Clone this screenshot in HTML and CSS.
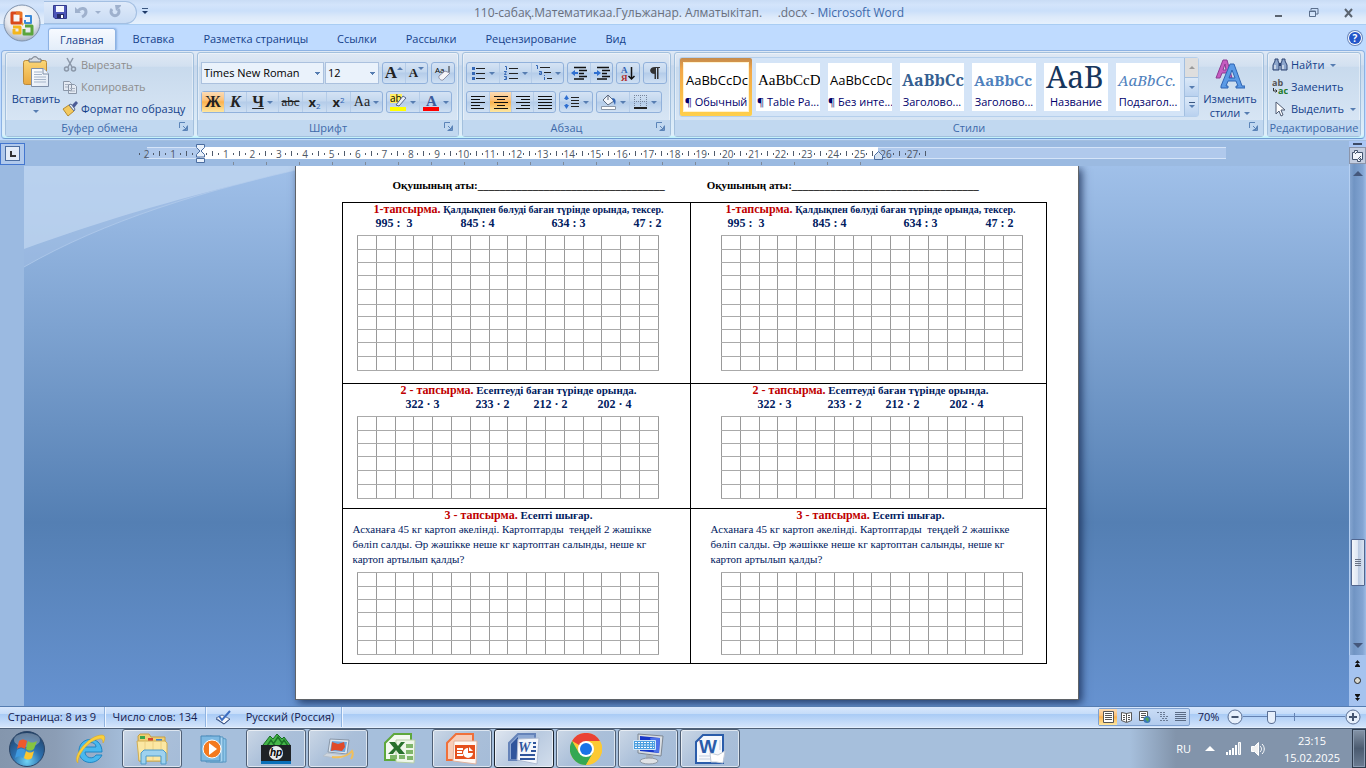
FILE: index.html
```
<!DOCTYPE html>
<html lang="ru">
<head>
  <meta charset="UTF-8">
  <title>110-сабақ.Математикаа.Гульжанар. Алматыкітап. .docx - Microsoft Word</title>
  <meta name="viewport" content="width=device-width, initial-scale=1.0">
  <link rel="stylesheet" href="styles.css">
</head>
<body>

  <!-- Shared shapes -->
  <svg class="defs" aria-hidden="true">
    <defs>
      <symbol id="grid10" viewBox="0 0 302 136">
        <path d="M.5 0v136M19.5 0v136M38.5 0v136M56.5 0v136M75.5 0v136M94.5 0v136M113.5 0v136M132.5 0v136M150.5 0v136M169.5 0v136M188.5 0v136M207.5 0v136M226.5 0v136M244.5 0v136M263.5 0v136M282.5 0v136M301.5 0v136" stroke="#999"/>
        <path d="M0 .5h302M0 14.5h302M0 27.5h302M0 40.5h302M0 54.5h302M0 69.5h302M0 81.5h302M0 94.5h302M0 107.5h302M0 121.5h302M0 135.5h302" stroke="#aaa"/>
      </symbol>
      <symbol id="grid6" viewBox="0 0 302 83">
        <path d="M.5 0v83M19.5 0v83M38.5 0v83M56.5 0v83M75.5 0v83M94.5 0v83M113.5 0v83M132.5 0v83M150.5 0v83M169.5 0v83M188.5 0v83M207.5 0v83M226.5 0v83M244.5 0v83M263.5 0v83M282.5 0v83M301.5 0v83" stroke="#999"/>
        <path d="M0 .5h302M0 14.5h302M0 27.5h302M0 40.5h302M0 54.5h302M0 68.5h302M0 82.5h302" stroke="#aaa"/>
      </symbol>
      <symbol id="launcher" viewBox="0 0 9 9">
        <path d="M.5 6V.5H6M3.5 8.5h5v-5M4 4l3 3M4.5 7.5h3v-3" fill="none" stroke="#5b84b8"/>
      </symbol>
      <linearGradient id="sheet" x2="1" y2="1"><stop stop-color="#fff"/><stop offset="1" stop-color="#dfe8f4"/></linearGradient>
      <linearGradient id="gold" y2="1" x2="0"><stop stop-color="#fbd676"/><stop offset="1" stop-color="#e9a83f"/></linearGradient>
      <radialGradient id="orb" cy=".85" r=".9"><stop stop-color="#6fd3f5"/><stop offset=".45" stop-color="#2c6fae"/><stop offset="1" stop-color="#203a5c"/></radialGradient>
      <radialGradient id="pearl" cy=".3" r=".75"><stop stop-color="#fff"/><stop offset=".6" stop-color="#e6e9ef"/><stop offset="1" stop-color="#9aa7ba"/></radialGradient>
    </defs>
  </svg>

  <!-- Title bar -->
  <header class="titlebar">
    <button class="office-button" aria-label="Кнопка Office">
      <svg width="38" height="38" viewBox="0 0 38 38">
        <circle cx="19" cy="19" r="18" fill="url(#pearl)" stroke="#7f93ae"/>
        <g fill="none" stroke-width="3" stroke-linejoin="round">
          <path d="M17 9h-8v10h9v-5" stroke="#d9481c"/>
          <path d="M13 9h5v5" stroke="#ea7426"/>
          <path d="M22 12h6v7h-6v-3" stroke="#3b8ad8" stroke-width="2"/>
          <path d="M10 23h7v6h-6v-4" stroke="#f4b61c"/>
          <path d="M22 22h7v8h-8v-5" stroke="#5ba53c"/>
        </g>
        <path d="M18 20h3M19.5 18.5v3" stroke="#e8a33c"/>
      </svg>
    </button>
    <div class="quick-access">
      <button aria-label="Сохранить">
        <svg width="14" height="14" viewBox="0 0 14 14"><path d="M.5.5h13v13H2L.5 12z" fill="#4c55b8" stroke="#343b8c"/><path d="M3 1h8v6H3z" fill="#f3f6fd"/><path d="M4 9h7v4H4z" fill="#262c66"/><path d="M8 10h2v3H8z" fill="#fff"/></svg>
      </button>
      <button aria-label="Отменить">
        <svg width="14" height="14" viewBox="0 0 14 14"><path d="M4 6c3-4 8-3 8 1 0 2-2 4-4 5" fill="none" stroke="#9fb1cd" stroke-width="3"/><path d="M1 2v6h6z" fill="#9fb1cd"/></svg>
      </button>
      <i class="arrow pale"></i>
      <button aria-label="Повторить">
        <svg width="14" height="14" viewBox="0 0 14 14"><path d="M4 4a4 4 0 1 0 6 0" fill="none" stroke="#9fb1cd" stroke-width="3"/><path d="M7 0h6v1l-5 5z" fill="#9fb1cd"/></svg>
      </button>
    </div>
    <button class="qat-more" aria-label="Настройка панели"><i class="arrow lined"></i></button>
    <h1>110-сабақ.Математикаа.Гульжанар. Алматыкітап. &nbsp; &nbsp; .docx - <span>Microsoft Word</span></h1>
    <div class="window-buttons">
      <button aria-label="Свернуть"><svg width="11" height="11" viewBox="0 0 11 11"><path d="M2 8h7v2H2z" fill="#5b6470"/></svg></button>
      <button aria-label="Восстановить"><svg width="11" height="11" viewBox="0 0 11 11"><path d="M3 3V1.5h7V7H8M1.5 4h6v5.5h-6zM1 4.5h7" fill="none" stroke="#5b6f8c"/></svg></button>
      <button aria-label="Закрыть"><svg width="11" height="11" viewBox="0 0 11 11"><path d="M2 2l7 8M9 2L2 10" stroke="#5b6470" stroke-width="2"/></svg></button>
    </div>
  </header>

  <!-- Tabs -->
  <nav class="tabs">
    <a href="#home" class="active">Главная</a>
    <a href="#insert">Вставка</a>
    <a href="#layout">Разметка страницы</a>
    <a href="#refs">Ссылки</a>
    <a href="#mail">Рассылки</a>
    <a href="#review">Рецензирование</a>
    <a href="#view">Вид</a>
    <button class="help" aria-label="Справка">?</button>
  </nav>

  <!-- Ribbon -->
  <section class="ribbon">
    <div class="group clipboard">
      <div class="group-body">
        <button class="big">
          <svg width="28" height="32" viewBox="0 0 28 32">
            <rect x="1.5" y="4.5" width="23" height="24" rx="2" fill="url(#gold)" stroke="#b98a3c"/>
            <path d="M7 6V3h3c0-3 6-3 6 0h3v3z" fill="#d8dde4" stroke="#6c7480"/>
            <path d="M9.5 12.5h12l5 5v13h-17z" fill="url(#sheet)" stroke="#7f8fa8"/>
            <path d="M12 16h8M12 18.5h8M12 21h12M12 23.5h12M12 26h12" stroke="#a5b4c9"/>
            <path d="M21 12v6h6" fill="#eef3fa" stroke="#7f8fa8"/>
          </svg>
          Вставить
          <i class="arrow"></i>
        </button>
        <div class="rows">
          <button class="line off">
            <svg width="16" height="16" viewBox="0 0 16 16"><path d="M5 1l5 9M11 1L6 10" stroke="#8b97a8" stroke-width="1.5"/><circle cx="4.5" cy="12" r="2" fill="none" stroke="#8b97a8" stroke-width="1.5"/><circle cx="11.5" cy="12" r="2" fill="none" stroke="#8b97a8" stroke-width="1.5"/></svg>
            Вырезать
          </button>
          <button class="line off">
            <svg width="16" height="16" viewBox="0 0 16 16"><path d="M1.5 2.5h6l2 2v7h-8zM6.5 5.5h6l2 2v7h-8z" fill="#e4eaf3" stroke="#8b97a8"/><path d="M3 5.5h3M3 8h3M8 9.5h5M8 12h5" stroke="#a7b1c0"/></svg>
            Копировать
          </button>
          <button class="line">
            <svg width="16" height="16" viewBox="0 0 16 16"><path d="M1 8l6-4 5 6-6 5z" fill="#f3c95f" stroke="#b58c31"/><path d="M7 4l2-1 4 5-1 2z" fill="#e8edf5" stroke="#5c6f92"/><path d="M10 4l4-4 2 2-4 5z" fill="#4a5b96"/></svg>
            Формат по образцу
          </button>
        </div>
      </div>
      <div class="group-title">Буфер обмена<svg class="launch" width="9" height="9"><use href="#launcher"/></svg></div>
    </div>

    <div class="group font">
      <div class="group-body stack">
        <div class="bar">
          <div class="combos">
            <select class="font-name" aria-label="Шрифт"><option>Times New Roman</option></select>
            <select class="font-size" aria-label="Размер шрифта"><option>12</option></select>
          </div>
          <div class="set">
            <button class="serif grow" aria-label="Увеличить шрифт">A<i class="up"></i></button>
            <button class="serif shrink" aria-label="Уменьшить шрифт">A<i class="arrow"></i></button>
          </div>
          <div class="set">
            <button aria-label="Очистить формат"><svg width="18" height="16" viewBox="0 0 18 16"><text x="1" y="8" class="tiny">Aa</text><path d="M15 1v6" stroke="#333"/><path d="M5 11l6-5 5 2-7 7c-2 1-5-2-4-4z" fill="#f4f4f8" stroke="#8b8fa5"/></svg></button>
          </div>
        </div>
        <div class="bar">
          <div class="set">
            <button class="serif on"><b>Ж</b></button>
            <button class="serif"><b><em>К</em></b></button>
            <button class="serif wide"><b><u>Ч</u></b><i class="arrow"></i></button>
            <button class="serif small"><s>abc</s></button>
            <button class="small"><b>x</b><sub>2</sub></button>
            <button class="small"><b>x</b><sup>2</sup></button>
            <button class="serif wide case">Aa<i class="arrow"></i></button>
          </div>
          <div class="set">
            <button class="wide" aria-label="Цвет выделения"><svg width="17" height="17" viewBox="0 0 17 17"><path d="M0 0h12v9H0z" fill="#ffee62"/><text x="0" y="8" class="mark">ab</text><path d="M6 11l7-9 3 2-7 8z" fill="#e9eefa" stroke="#58698f"/><path d="M0 13h16v4H0z" fill="#ff0"/></svg><i class="arrow"></i></button>
            <button class="wide" aria-label="Цвет текста"><svg width="17" height="17" viewBox="0 0 17 17"><text x="3" y="12" class="letter">A</text><path d="M0 13h16v4H0z" fill="red"/></svg><i class="arrow"></i></button>
          </div>
        </div>
      </div>
      <div class="group-title">Шрифт<svg class="launch" width="9" height="9"><use href="#launcher"/></svg></div>
    </div>

    <div class="group paragraph">
      <div class="group-body stack">
        <div class="bar">
          <div class="set">
            <button class="wide" aria-label="Маркеры"><svg width="15" height="14" viewBox="0 0 15 14"><path d="M5 2.5h9M5 7.5h9M5 12.5h9" stroke="#222"/><path d="M1 1h3v3H1zM1 6h3v3H1zM1 11h3v3H1z" fill="#3567b5"/></svg><i class="arrow"></i></button>
            <button class="wide" aria-label="Нумерация"><svg width="15" height="14" viewBox="0 0 15 14"><path d="M5 2.5h9M5 7.5h9M5 12.5h9" stroke="#222"/><path d="M1 .5h1.5V4M0 5.5h2.5L.5 8.5h2M0 10.5h2.5v3H0M1 12h1" fill="none" stroke="#3567b5"/></svg><i class="arrow"></i></button>
            <button class="wide" aria-label="Многоуровневый список"><svg width="17" height="16" viewBox="0 0 17 16"><path d="M5 2.5h10M9 7.5h7M12 13.5h5" stroke="#222"/><path d="M1 .5h1.5V4M4 6.5h2.5v3H4.5V8H6M9.5 10v1M9.5 12v3" fill="none" stroke="#3567b5"/></svg><i class="arrow"></i></button>
          </div>
          <div class="set">
            <button aria-label="Уменьшить отступ"><svg width="16" height="14" viewBox="0 0 16 14"><path d="M3 1.5h12M8 4.5h8M8 7.5h5M8 10.5h8M3 13h10" stroke="#111" stroke-width="1.5"/><path d="M0 7l4-3v2h3v2H4v2z" fill="#2f6fd0"/></svg></button>
            <button aria-label="Увеличить отступ"><svg width="16" height="14" viewBox="0 0 16 14"><path d="M3 1.5h12M8 4.5h8M8 7.5h5M8 10.5h8M3 13h10" stroke="#111" stroke-width="1.5"/><path d="M7 7L3 4v2H0v2h3v2z" fill="#2f6fd0"/></svg></button>
          </div>
          <div class="set">
            <button aria-label="Сортировка"><svg width="16" height="17" viewBox="0 0 16 17"><text x="1" y="8" class="sort-a">А</text><text x="1" y="16" class="sort-z">Я</text><path d="M11.5 2v12M8.5 11l3 3 3-3" fill="none" stroke="#111" stroke-width="1.5"/></svg></button>
          </div>
          <div class="set">
            <button aria-label="Знаки абзаца"><svg width="12" height="14" viewBox="0 0 12 14"><path d="M6 8C-.5 8-.5 1 6 1h5v1H9.500v11H8V2H7v11H5.500V8z" fill="#333"/></svg></button>
          </div>
        </div>
        <div class="bar">
          <div class="set">
            <button aria-label="По левому краю"><svg width="14" height="13" viewBox="0 0 14 13"><path d="M0 .5h14M0 3.5h9M0 6.5h14M0 9.5h9M0 12.5h13" stroke="#111"/></svg></button>
            <button class="on" aria-label="По центру"><svg width="14" height="13" viewBox="0 0 14 13"><path d="M0 .5h14M3 3.5h8M0 6.5h14M3 9.5h8M0 12.5h14" stroke="#111"/></svg></button>
            <button aria-label="По правому краю"><svg width="14" height="13" viewBox="0 0 14 13"><path d="M0 .5h14M5 3.5h9M0 6.5h14M5 9.5h9M0 12.5h14" stroke="#111"/></svg></button>
            <button aria-label="По ширине"><svg width="14" height="13" viewBox="0 0 14 13"><path d="M0 .5h14M0 3.5h14M0 6.5h14M0 9.5h14M0 12.5h14" stroke="#111"/></svg></button>
          </div>
          <div class="set">
            <button class="wide" aria-label="Интервал"><svg width="16" height="16" viewBox="0 0 16 16"><path d="M7 3.5h8M7 6.5h8M7 9.5h8M7 12.5h8" stroke="#222"/><path d="M0 5l2.5-4L5 5H3.500v1h-2V5zM0 11l2.5 4L5 11H3.500v-1h-2v1z" fill="#2f6fd0"/></svg><i class="arrow"></i></button>
          </div>
          <div class="set">
            <button class="wide" aria-label="Заливка"><svg width="17" height="16" viewBox="0 0 17 16"><path d="M3 6l5-5 6 6-6 4z" fill="#f3f6fb" stroke="#5e6b80"/><path d="M8 1v5" stroke="#5e6b80"/><path d="M12 4c4 0 4 3 3 7l-2-4z" fill="#3567b5"/><path d="M1.5 12.5h14v3h-14z" fill="#fff" stroke="#8b97a8"/></svg><i class="arrow"></i></button>
            <button class="wide" aria-label="Границы"><svg width="14" height="14" viewBox="0 0 14 14"><path d="M.5 0v13M6.5 0v13M12.5 0v13M0 .5h13M0 6.5h13" stroke="#77859c" stroke-dasharray="1 1"/><path d="M0 13h13" stroke="#222" stroke-width="2"/></svg><i class="arrow"></i></button>
          </div>
        </div>
      </div>
      <div class="group-title">Абзац<svg class="launch" width="9" height="9"><use href="#launcher"/></svg></div>
    </div>

    <div class="group styles">
      <div class="group-body">
        <div class="gallery">
          <button class="style selected"><span class="card"><span class="sample">AaBbCcDc</span><span class="name">¶ Обычный</span></span></button>
          <button class="style"><span class="card"><span class="sample times">AaBbCcD</span><span class="name">¶ Table Pa...</span></span></button>
          <button class="style"><span class="card"><span class="sample">AaBbCcDc</span><span class="name">¶ Без инте...</span></span></button>
          <button class="style"><span class="card"><span class="sample head1">AaBbCc</span><span class="name">Заголово...</span></span></button>
          <button class="style"><span class="card"><span class="sample head2">AaBbCc</span><span class="name">Заголово...</span></span></button>
          <button class="style"><span class="card"><span class="sample title">AaB</span><span class="name">Название</span></span></button>
          <button class="style"><span class="card"><span class="sample subtitle">AaBbCc.</span><span class="name">Подзагол...</span></span></button>
          <div class="gallery-scroll">
            <button class="dim" aria-label="Вверх"><i class="up"></i></button>
            <button aria-label="Вниз"><i class="arrow"></i></button>
            <button aria-label="Все стили"><i class="arrow lined"></i></button>
          </div>
        </div>
        <button class="big change">
          <svg width="30" height="30" viewBox="0 0 30 30">
            <path d="M1 19L8 1h4l5 18h-4l-1-5H7l-2 5zM8 11h3l-1-6z" fill="#c65cc0" stroke="#8d3b92"/>
            <path d="M6 27l9-22h4l8 22h3v2h-9v-2h2l-2-5h-8l-2 5h2v2H6zM14 19h6l-3-8z" fill="#5b9ae6" stroke="#2f65b3"/>
          </svg>
          Изменить
          <span>стили <i class="arrow"></i></span>
        </button>
      </div>
      <div class="group-title">Стили<svg class="launch" width="9" height="9"><use href="#launcher"/></svg></div>
    </div>

    <div class="group editing">
      <div class="group-body">
        <div class="rows">
          <button class="line">
            <svg width="16" height="16" viewBox="0 0 16 16"><path d="M3 2h3v2l1 2v7H1V8l2-4zM10 2h3v2l2 4v5H9V6l1-2z" fill="#8da6cc" stroke="#2c4271"/><path d="M7 6h2v3H7z" fill="#2c4271"/><path d="M3 8v4M11 8v4" stroke="#fff"/></svg>
            Найти<i class="arrow"></i>
          </button>
          <button class="line">
            <svg width="16" height="16" viewBox="0 0 16 16"><text x="0" y="7" class="swap">ab</text><text x="6" y="15" class="swap new">ac</text><path d="M1.5 9v3H5M3.5 10.5L5 12l-1.5 1.5" fill="none" stroke="#333"/></svg>
            Заменить
          </button>
          <button class="line">
            <svg width="16" height="16" viewBox="0 0 16 16"><path d="M4 1v12l3-3 2 5 2-1-2-5h4z" fill="#fff" stroke="#4f5b73"/></svg>
            Выделить<i class="arrow"></i>
          </button>
        </div>
      </div>
      <div class="group-title">Редактирование</div>
    </div>
  </section>

  <!-- Editor -->
  <main class="editor">
    <div class="editor-main">
      <div class="ruler">
        <button class="tab-stop" aria-label="Табуляция"><i></i></button>
        <div class="ruler-strip">
          <div class="ruler-scale" id="scale"></div>
          <svg class="marker indent-left" width="9" height="19" viewBox="0 0 9 19"><path d="M.5.5h8v3L5 7l3.5 3.5V13h-8v-2.5L4 7 .5 3.5z" fill="#e9f1fb" stroke="#4b6da0"/><path d="M.5 14.5h8v4h-8z" fill="#e9f1fb" stroke="#4b6da0"/></svg>
          <svg class="marker indent-right" width="9" height="9" viewBox="0 0 9 9"><path d="M4.5.5l4 4v4h-8v-4z" fill="#d5e2f2" stroke="#4b6da0"/></svg>
        </div>
      </div>

      <div class="canvas">
        <div class="left-ruler"></div>
        <div class="desk">
          <svg class="swoosh" width="290" height="104" viewBox="0 0 290 104">
            <path d="M0 0h290C180 24 80 55 0 101z" fill="#a8c4e6" fill-opacity=".45"/>
            <path d="M0 0h290C180 25 90 50 0 83z" fill="#c8dcf4" fill-opacity=".6"/>
            <path d="M0 101C80 55 180 24 290 0" fill="none" stroke="#b5cdec" stroke-opacity=".7"/>
          </svg>
          <article class="page">
            <div class="pupils">
              <span>Оқушының аты:__________________________________</span>
              <span>Оқушының аты:__________________________________</span>
            </div>
            <table class="tasks">
              <tr>
                <td>
                  <h3><span>1-тапсырма.</span> <small>Қалдықпен бөлуді баған түрінде орында, тексер.</small></h3>
                  <p class="sums division"><b>995 : &nbsp;3</b><b>845 : 4</b><b>634 : 3</b><b>47 : 2</b></p>
                  <svg class="squares" width="302" height="136"><use href="#grid10"/></svg>
                </td>
                <td>
                  <h3><span>1-тапсырма.</span> <small>Қалдықпен бөлуді баған түрінде орында, тексер.</small></h3>
                  <p class="sums division"><b>995 : &nbsp;3</b><b>845 : 4</b><b>634 : 3</b><b>47 : 2</b></p>
                  <svg class="squares" width="302" height="136"><use href="#grid10"/></svg>
                </td>
              </tr>
              <tr>
                <td>
                  <h3><span>2 - тапсырма.</span> Есептеуді баған түрінде орында.</h3>
                  <p class="sums product"><b>322 · 3</b><b>233 · 2</b><b>212 · 2</b><b>202 · 4</b></p>
                  <svg class="squares" width="302" height="83"><use href="#grid6"/></svg>
                </td>
                <td>
                  <h3><span>2 - тапсырма.</span> Есептеуді баған түрінде орында.</h3>
                  <p class="sums product"><b>322 · 3</b><b>233 · 2</b><b>212 · 2</b><b>202 · 4</b></p>
                  <svg class="squares" width="302" height="83"><use href="#grid6"/></svg>
                </td>
              </tr>
              <tr>
                <td>
                  <h3><span>3 - тапсырма.</span> Есепті шығар.</h3>
                  <p class="problem">Асханаға 45 кг картоп әкелінді. Картоптарды&nbsp; теңдей 2 жәшікке<br>бөліп салды. Әр жәшікке неше кг картоптан салынды, неше кг<br>картоп артылып қалды?</p>
                  <svg class="squares" width="302" height="83"><use href="#grid6"/></svg>
                </td>
                <td>
                  <h3><span>3 - тапсырма.</span> Есепті шығар.</h3>
                  <p class="problem">Асханаға 45 кг картоп әкелінді. Картоптарды&nbsp; теңдей 2 жәшікке<br>бөліп салды. Әр жәшікке неше кг картоптан салынды, неше кг<br>картоп артылып қалды?</p>
                  <svg class="squares" width="302" height="83"><use href="#grid6"/></svg>
                </td>
              </tr>
            </table>
          </article>
        </div>
      </div>
    </div>

    <div class="scrollbar">
      <div class="split"></div>
      <button class="ruler-toggle" aria-label="Линейка"><svg width="13" height="13" viewBox="0 0 13 13"><path d="M1.5 3.5h2v-2h3v2h5v7h-2v2h-3v-2h-5z" fill="#f2f5fb" stroke="#44546f"/><path d="M4 5l2-2M7 10l3-3M8 11l2-2" stroke="#44546f"/></svg></button>
      <div class="track">
        <i class="up"></i>
        <div class="thumb"><i></i></div>
        <i class="arrow"></i>
      </div>
      <div class="jump">
        <button aria-label="Предыдущая страница"><svg width="7" height="7" viewBox="0 0 7 7"><path d="M1 3h5L3.5 0zM1 6h5L3.5 3z" fill="#111"/><path d="M1 6.5h5" stroke="#111"/></svg></button>
        <button aria-label="Выбор объекта"><svg width="7" height="7" viewBox="0 0 7 7"><circle cx="3.5" cy="3.5" r="3" fill="#d9d9d0" stroke="#222"/></svg></button>
        <button aria-label="Следующая страница"><svg width="7" height="7" viewBox="0 0 7 7"><path d="M1 1h5L3.5 4zM1 4h5L3.5 7z" fill="#111"/><path d="M1 .5h5" stroke="#111"/></svg></button>
      </div>
    </div>
  </main>

  <!-- Status bar -->
  <footer class="status">
    <button class="page-no">Страница: 8 из 9</button>
    <button class="words">Число слов: 134</button>
    <button class="spell" aria-label="Правописание"><svg width="16" height="15" viewBox="0 0 16 15"><path d="M1 8l6-3 8 4-6 5z" fill="#f4f7fc" stroke="#61779f"/><path d="M1 9l8 5 6-5" fill="none" stroke="#3d5687"/><path d="M4 6l3 4 8-9" fill="none" stroke="#3c6dc0" stroke-width="2"/></svg></button>
    <button class="lang">Русский (Россия)</button>
    <div class="views">
      <button class="on" aria-label="Разметка страницы"><svg width="13" height="12" viewBox="0 0 13 12"><path d="M1.5.5h10v11h-10z" fill="#fff" stroke="#555"/><path d="M3 2.5h7M3 4.5h7M3 6.5h7M3 8.5h7" stroke="#555"/></svg></button>
      <button aria-label="Режим чтения"><svg width="13" height="12" viewBox="0 0 13 12"><path d="M1.5 1.5l5 1 5-1v8l-5 2-5-2z" fill="#fff" stroke="#555"/><path d="M6.5 2v9M3 4.5h2M3 6.5h2M3 8.5h2M8 4.5h2M8 6.5h2M8 8.5h2" stroke="#555"/></svg></button>
      <button aria-label="Веб-документ"><svg width="13" height="12" viewBox="0 0 13 12"><path d="M1.5.5h8v9h-8z" fill="#fff" stroke="#555"/><path d="M3 2.5h5M3 4.5h5M3 6.5h3" stroke="#555"/><circle cx="9" cy="8.5" r="3.5" fill="#3a78b8"/><path d="M7 8l2-2 2 2-1 3z" fill="#4fa558"/></svg></button>
      <button aria-label="Структура"><svg width="13" height="12" viewBox="0 0 13 12"><path d="M1 1.5h8M4 3.5h6M4 5.5h8M6 7.5h6M4 9.5h8" stroke="#6b7c96" stroke-dasharray="2 1"/></svg></button>
      <button aria-label="Черновик"><svg width="13" height="12" viewBox="0 0 13 12"><path d="M1 1.5h11M1 3.5h11M1 5.5h11M1 7.5h11M1 9.5h11" stroke="#5a6b85"/></svg></button>
    </div>
    <span class="percent">70%</span>
    <button class="round" aria-label="Уменьшить"><svg width="16" height="16" viewBox="0 0 16 16"><circle cx="8" cy="8" r="7" fill="#e6effb" stroke="#5a6f94"/><path d="M4.5 8h7" stroke="#44546f" stroke-width="2"/></svg></button>
    <input class="zoom" type="range" min="10" max="500" value="135" aria-label="Масштаб">
    <button class="round" aria-label="Увеличить"><svg width="16" height="16" viewBox="0 0 16 16"><circle cx="8" cy="8" r="7" fill="#e6effb" stroke="#5a6f94"/><path d="M4 8h8M8 4v8" stroke="#44546f" stroke-width="2"/></svg></button>
  </footer>

  <!-- Taskbar -->
  <footer class="taskbar">
    <button class="start" aria-label="Пуск">
      <svg width="38" height="38" viewBox="0 0 38 38">
        <circle cx="19" cy="19" r="17.500" fill="url(#orb)" stroke="#2b4567"/>
        <ellipse cx="19" cy="10" rx="13" ry="7" fill="#fff" fill-opacity=".3"/>
        <path d="M11 11c3-2 5-2 8 0l-2 8c-3-2-5-2-8 0z" fill="#ee5a2c"/>
        <path d="M20 11c3 2 5 2 9 0l-3 8c-3 2-5 2-8 0z" fill="#86c440"/>
        <path d="M9 20c3-2 5-2 8 0l-2 8c-3-2-5-2-8 0z" fill="#3f9ae0"/>
        <path d="M18 21c3 2 5 2 8 0l-2 7c-3 2-5 2-8 0z" fill="#fcc62f"/>
      </svg>
    </button>
    <button class="task" aria-label="Internet Explorer">
      <svg width="32" height="32" viewBox="0 0 32 32"><path d="M28 19H11c0 6 8 8 11 3h6C22 34 4 31 5 17 6 3 28 2 28 19zM11 14h11c0-6-10-6-11 0z" fill="#49b8ee" stroke="#1f86c4"/><path d="M4 30C-3 25 14 2 28 2c4 0 3 5 1 8 0-3-1-5-4-4C15 7 3 22 4 30z" fill="#f9cf3d" stroke="#dba51a" stroke-width=".5"/></svg>
    </button>
    <button class="task open" aria-label="Проводник">
      <svg width="34" height="32" viewBox="0 0 34 32"><path d="M3 3l2-2h9l2 3h14v24H4z" fill="#f0cf72" stroke="#c59f45"/><path d="M5 3h5v3H5z" fill="#3ba64a"/><path d="M13 5h5v3h-5z" fill="#d8452f"/><path d="M21 6h6v3h-6z" fill="#3b7fd0"/><path d="M2 8h28l2 2v18H4z" fill="#fbe7a3" stroke="#d0ad55"/><path d="M10 9v18M18 9v18M26 9v18" stroke="#ecd083"/><path d="M6 31V20l3-3h19l3 3v11h-5v-8H11v8z" fill="#9ed2ef" stroke="#4f9ac8"/></svg>
    </button>
    <button class="task" aria-label="Медиаплеер">
      <svg width="32" height="32" viewBox="0 0 32 32"><path d="M12 3l16 3v23H12z" fill="#8dc6ea" stroke="#5897c2"/><path d="M8 3l17 1v25H8z" fill="#a8d5f1" stroke="#5897c2"/><path d="M3 3h19v25H3z" fill="#7db9e2" stroke="#4b89b8"/><circle cx="14" cy="16" r="9" fill="#f47a1f" stroke="#fff"/><path d="M11 10l8 6-8 6z" fill="#fff"/></svg>
    </button>
    <button class="task open" aria-label="HP">
      <svg width="32" height="32" viewBox="0 0 32 32"><path d="M3 12l7-9 3 3 4-5 5 5 2-2 6 8v4H3z" fill="#45b649" stroke="#176b24"/><path d="M7 13l4-6 4 6M14 10l4-6 4 6M20 13l4-6 4 6" fill="none" stroke="#1b7428" stroke-width="1.5"/><path d="M1 12h30v16H1z" fill="#1e2226"/><path d="M1 28h30v3H1z" fill="#0b70b8"/><circle cx="16" cy="20" r="7" fill="#e8ebee"/><text x="10" y="23" class="hp">hp</text></svg>
    </button>
    <button class="task open" aria-label="Ноутбук">
      <svg width="32" height="24" viewBox="0 0 32 24"><path d="M8 2l19 1-2 14-19-2z" fill="#dfe6ee" stroke="#8997a8"/><path d="M10 4l15 1-2 10-15-1z" fill="#6da6dc"/><path d="M10 5l6 2 6-2 1 5-3 4-7-1-4 1z" fill="#e04a2a"/><path d="M5 16l20 2-6 4-18-3z" fill="#cfd6de" stroke="#b4bfcc"/><path d="M10 20c9 1 16-1 20-6 1 2 1 5-1 8" fill="none" stroke="#f0bf5c" stroke-width="2"/></svg>
    </button>
    <button class="task" aria-label="Excel">
      <svg width="32" height="32" viewBox="0 0 32 32"><path d="M10 1h17v26H1V10z" fill="#f4faf0" stroke="#5ea83c" stroke-width="2"/><path d="M12 7h19l-1 23-18-1z" fill="#eef6e8" stroke="#b6cfa6"/><path d="M22 11h7v4h-7zM22 17h7v4h-7zM6 22h7v4H6zM15 22h6v4h-6zM23 23h6v4h-6z" fill="#7fb66a"/><path d="M5 9h6l3 4 3-4h4l-5 6 5 6h-6l-3-4-3 4H4l6-6z" fill="#28702c"/></svg>
    </button>
    <button class="task open" aria-label="PowerPoint">
      <svg width="32" height="32" viewBox="0 0 32 32"><path d="M10 1h17v26H1V10z" fill="#f7cdb9" stroke="#f0703a" stroke-width="2"/><path d="M8 8h23l-1 23-23-3z" fill="#fff8f3" stroke="#e0b29d"/><path d="M9 12h20v14H9z" fill="#e5501d"/><path d="M11 16h6M11 19h5M11 22h6" stroke="#fff" stroke-width="2"/><path d="M22 15a5 5 0 1 0 5 5h-5z" fill="#fff"/><path d="M23 14v4h4z" fill="#fff"/></svg>
    </button>
    <button class="task open current" aria-label="Word 2007">
      <svg width="32" height="32" viewBox="0 0 32 32"><path d="M10 1h17v26H1V10z" fill="#8ea9d4" stroke="#6583b9" stroke-width="2"/><path d="M3 11l7-7v22H3z" fill="#2f559c"/><path d="M10 6l21-1-2 26-20-4z" fill="#f4f7fc" stroke="#aebbd2"/><text x="10" y="19" class="w07">W</text><path d="M25 10h3M25 14h3M23 18h5M12 22h15M12 26h15" stroke="#2f559c" stroke-width="2"/></svg>
    </button>
    <button class="task open" aria-label="Chrome">
      <svg width="32" height="32" viewBox="0 0 32 32"><circle cx="16" cy="16" r="16" fill="#fcc934"/><path d="M16 16L2.1 8A16 16 0 0 1 29.900 8H16z" fill="#ea4335"/><path d="M2.100 8A16 16 0 0 0 16 32l7-12-14 0z" fill="#34a853"/><path d="M16 8h13.900A16 16 0 0 1 16 32l7-12z" fill="#fcc934"/><circle cx="16" cy="16" r="8" fill="#fff"/><circle cx="16" cy="16" r="6" fill="#1a73e8"/></svg>
    </button>
    <button class="task open" aria-label="Экранная клавиатура">
      <svg width="32" height="32" viewBox="0 0 32 32"><path d="M6 1l25 2-2 20-23-3z" fill="#d9dde2" stroke="#7d8793"/><path d="M8 3l20 2-1 15-19-2z" fill="#1636c8"/><path d="M18 5l10 0-1 15-5-1z" fill="#4d72ea"/><path d="M14 22h7v5h-7z" fill="#a9b0b9"/><ellipse cx="17" cy="28" rx="9" ry="3" fill="#dfe2e6" stroke="#8f98a3"/><path d="M1.5 7.5h22v9h-22z" fill="#4b9fe0" stroke="#cfe6f8"/><path d="M3 9.5h19M3 12h19M3 14.5h19" stroke="#fff" stroke-dasharray="2 1"/></svg>
    </button>
    <button class="task open" aria-label="Word 2010">
      <svg width="32" height="32" viewBox="0 0 32 32"><path d="M9 2h20v28H2V9z" fill="#f5f8fd" stroke="#2a5caa" stroke-width="2"/><path d="M5 23h11M5 26h13M26 7v10" stroke="#c4cfdf"/><text x="5" y="20" class="w10">W</text><path d="M16 20l8 2 7-4-2 12-7-1-5 0z" fill="#fff" stroke="#c2cad6"/></svg>
    </button>
    <div class="tray">
      <span class="layout">RU</span>
      <i class="up"></i>
      <svg width="17" height="13" viewBox="0 0 17 13"><path d="M1 10h2v3H1zM4 8h2v5H4zM7 6h2v7H7zM10 3h2v10h-2z" fill="#fff"/><path d="M13.5.5h2v12h-2z" fill="#c9d0d9" stroke="#fff"/></svg>
      <svg width="16" height="16" viewBox="0 0 16 16"><path d="M1.5 5.5h3l4-4v13l-4-4h-3z" fill="#f1f1f1" stroke="#fff"/><path d="M10 5c2 2 2 4 0 6M12 3c3 3 3 7 0 10" fill="none" stroke="#fff"/></svg>
      <time datetime="2025-02-15T23:15">23:15<br>15.02.2025</time>
    </div>
    <button class="show-desktop" aria-label="Свернуть все окна"></button>
  </footer>

  <script>
    // Horizontal ruler: two centimetres of margin, then 27 of text
    const scale = document.getElementById('scale');
    for (let cm = -2; cm <= 27; cm++) {
      const cell = document.createElement('div');
      cell.classList.add('cm');
      cell.innerHTML = `<i></i><span>${cm === 0 ? '' : Math.abs(cm)}</span><i></i>`;
      scale.appendChild(cell);
    }
  </script>
</body>
</html>
```
FILE: styles.css
```
* {
  margin: 0;
  padding: 0;
  box-sizing: border-box;
}

body {
  font-family: 'Open Sans', 'Noto Sans', sans-serif;
  font-size: 11px;
  line-height: 16px;
  color: #15428b;
  background: #bfdbff;
  display: flex;
  flex-direction: column;
  min-height: 100vh;
}

button {
  font: inherit;
  color: inherit;
  background: none;
  border: none;
  display: flex;
  align-items: center;
  justify-content: center;
}

svg {
  flex: none;
  display: block;
}

.defs {
  position: absolute;
  width: 0;
  height: 0;
}

.arrow,
.up {
  flex: none;
  width: 0;
  height: 0;
  border: 3px solid transparent;
  border-top-color: #567db1;
  border-bottom-width: 0;
}

.up {
  border: 3px solid transparent;
  border-bottom-color: #567db1;
  border-top-width: 0;
}

.arrow.pale {
  border-top-color: #9fb1cd;
}

.arrow.lined {
  position: relative;
}

.arrow.lined::before {
  content: "";
  position: absolute;
  left: -3px;
  top: -6px;
  width: 6px;
  height: 1px;
  background: #3a5680;
}

/* Title bar */
.titlebar {
  position: relative;
  display: flex;
  align-items: center;
  height: 25px;
  padding: 0 8px 0 44px;
  background: linear-gradient(#c9dcf5 0, #d3e4fb 20%, #cadffa 45%, #dce9fa 70%, #e6f1fd 100%);
  border-bottom: 1px solid #a9cdf3;
}

.office-button {
  position: absolute;
  left: 3px;
  top: 4px;
  z-index: 2;
}

.quick-access {
  display: flex;
  align-items: center;
  gap: 7px;
  height: 23px;
  padding: 0 14px 0 9px;
  border: 1px solid #a3bfe2;
  border-left: none;
  border-radius: 0 12px 12px 0;
  background: linear-gradient(#dfeafa, #c9dcf4);
}

.qat-more {
  width: 16px;
  height: 20px;
}

.qat-more .arrow {
  border-top-color: #1f3a68;
}

.titlebar h1 {
  flex: 1;
  font-size: 12px;
  font-weight: 400;
  text-align: center;
  color: #696f7c;
  padding: 2px 48px 0 0;
}

.titlebar h1 span {
  color: #3e6aaa;
}

.window-buttons {
  display: flex;
  gap: 24px;
  padding-right: 4px;
}

/* Tabs */
.tabs {
  display: flex;
  align-items: flex-end;
  gap: 5px;
  height: 25px;
  padding: 0 5px 0 48px;
  background: #bfdbff;
}

.tabs a {
  height: 22px;
  padding: 0 12px;
  line-height: 22px;
  color: #15428b;
  text-decoration: none;
}

.tabs a.active {
  border: 1px solid #8db2e3;
  border-bottom: none;
  border-radius: 3px 3px 0 0;
  background: linear-gradient(#f7faff, #e3edf9);
  box-shadow: 1px 0 2px #8db2e3;
  padding: 0 11px;
}

.help {
  align-self: center;
  margin-left: auto;
  width: 12px;
  height: 12px;
  border-radius: 50%;
  background: #2456c9;
  box-shadow: 0 0 0 1px #fff, 0 0 0 2px #6b87bb;
  color: #fff;
  font-size: 10px;
  line-height: 12px;
  font-weight: 700;
}

/* Ribbon */
.ribbon {
  display: flex;
  gap: 3px;
  margin: 0 1px;
  padding: 1px 3px;
  border: 1px solid #8db2e3;
  border-bottom-color: #6f9cd0;
  border-radius: 4px;
  background: linear-gradient(#dee8f5 0, #d1dff0 16%, #c7d8ed 17%, #e0f0fb 100%);
  box-shadow: inset 0 -2px 1px #c5f3fb;
}

.group {
  display: flex;
  flex-direction: column;
  min-width: 0;
  border: 1px solid #a3c0dd;
  border-radius: 3px;
  background: linear-gradient(#dfe8f4 0, #d2e0f0 16%, #c8daed 17%, #dbe8f6 100%);
  box-shadow: inset 0 0 0 1px rgba(255, 255, 255, .4);
}

.clipboard { flex: 0 0 189px; }
.font { flex: 0 0 262px; }
.paragraph { flex: 0 0 209px; }
.styles { flex: 1; }
.editing { flex: 0 0 94px; }

.group-body {
  display: flex;
  height: 67px;
  padding: 1px 4px 0;
}

.group-title {
  display: flex;
  align-items: center;
  justify-content: center;
  position: relative;
  height: 16px;
  color: #3e6aaa;
  background: #c1d8f0;
}

.launch {
  position: absolute;
  right: 5px;
  top: 2px;
}

.big {
  flex-direction: column;
  justify-content: flex-start;
  width: 52px;
  line-height: 14px;
  gap: 4px;
  padding-top: 2px;
}

.change {
  width: 58px;
  gap: 0;
}

.change svg {
  margin-bottom: 3px;
}

.change span {
  display: flex;
  align-items: center;
  gap: 4px;
}

.rows {
  display: flex;
  flex-direction: column;
}

.line {
  height: 22px;
  gap: 3px;
  justify-content: flex-start;
  white-space: nowrap;
}

.line .arrow {
  margin-left: 3px;
}

.line.off {
  color: #8d8d8d;
}

.stack {
  flex-direction: column;
  gap: 7px;
  padding: 9px 3px 0;
}

.bar {
  display: flex;
  gap: 3px;
}

.set {
  display: flex;
  height: 22px;
  border: 1px solid #91b1db;
  border-radius: 3px;
  background: linear-gradient(#d5e3f4 0, #c3d7ee 45%, #b4cce9 50%, #cfe0f3 100%);
}

.set button {
  position: relative;
  width: 22px;
  color: #222;
}

.set button + button {
  border-left: 1px solid #b5cce8;
}

.set .wide {
  width: 32px;
  gap: 3px;
}

.set .on,
.views .on {
  background: linear-gradient(#fbdbb5 0, #fcc27b 40%, #fbb24f 50%, #fde7a0 100%);
}

.combos {
  display: flex;
  gap: 1px;
}

.combos select {
  height: 22px;
  padding: 0 2px;
  border: 1px solid #abc1de;
  border-radius: 0;
  background: linear-gradient(#567db1, #567db1) no-repeat right 3px top 9px / 5px 1px, linear-gradient(#567db1, #567db1) no-repeat right 4px top 10px / 3px 1px, linear-gradient(#567db1, #567db1) no-repeat right 5px top 11px / 1px 1px, #eaf2fb;
  color: #000;
  font: inherit;
  appearance: none;
}

.font-name { width: 123px; }
.font-size { width: 54px; }

.serif {
  font-family: 'Liberation Serif', serif;
  font-size: 16px;
}

.serif.grow { font-size: 17px; font-weight: 700; }
.serif.shrink { font-size: 13px; font-weight: 700; }
.serif.case { font-size: 14px; }

.grow .up,
.shrink .arrow {
  align-self: flex-start;
  margin-top: 4px;
}

.set .small {
  width: 24px;
  font-size: 13px;
}

.set .small sub,
.set .small sup {
  font-size: 8px;
  line-height: 8px;
  color: #2f5fb0;
}

.small sub { align-self: flex-end; margin-bottom: 2px; }
.small sup { align-self: flex-start; margin-top: 4px; }

.tiny { font: 8px 'Open Sans', sans-serif; }
.mark { font: 10px 'Open Sans', sans-serif; }
.letter { font: bold 15px 'Liberation Serif', serif; fill: #3d5c9c; }
.sort-a { font: bold 9px 'Liberation Serif', serif; fill: #2f5fb0; }
.sort-z { font: bold 9px 'Liberation Serif', serif; fill: #b03030; }
.swap { font: bold 9px 'Open Sans', sans-serif; fill: #555; }
.swap.new { fill: #1d7a2a; }

/* Styles gallery */
.styles .group-body {
  padding-top: 4px;
  justify-content: space-between;
}

.gallery {
  display: flex;
  height: 60px;
  border: 1px solid #b5cfec;
  border-radius: 3px;
  background: #d4e4f7;
}

.style {
  width: 72px;
  height: 58px;
  padding: 4px;
  border-radius: 2px;
}

.style.selected {
  background: linear-gradient(#c48a4c, #f2a648 20%, #ffcf4b);
}

.selected .card {
  box-shadow: 0 0 0 1px #fff3cf;
}

.card {
  display: flex;
  flex-direction: column;
  width: 64px;
  height: 48px;
  overflow: hidden;
  background: #fff;
}

.sample {
  height: 31px;
  padding-left: 2px;
  font-size: 13px;
  line-height: 34px;
  overflow: hidden;
  text-align: left;
  white-space: nowrap;
  color: #000;
}

.sample.times { font-family: 'Liberation Serif', serif; font-size: 15px; }
.sample.head1 { font-family: 'Noto Serif', 'DejaVu Serif', serif; font-size: 16px; font-weight: 700; color: #365f91; }
.sample.head2 { font-family: 'Noto Serif', 'DejaVu Serif', serif; font-size: 15px; font-weight: 700; color: #4f81bd; }
.sample.title { font-family: 'Noto Serif', 'DejaVu Serif', serif; font-size: 30px; line-height: 28px; color: #17365d; }
.sample.subtitle { font-family: 'Noto Serif', 'DejaVu Serif', serif; font-size: 15px; font-style: italic; color: #4f81bd; }

.name {
  text-align: center;
  white-space: nowrap;
  color: #00006b;
}

.gallery-scroll {
  display: flex;
  flex-direction: column;
  width: 14px;
  border-left: 1px solid #a3bfe0;
}

.gallery-scroll button {
  flex: 1;
  background: linear-gradient(#dce9f8, #b9d1ef);
}

.gallery-scroll button + button {
  border-top: 1px solid #a3bfe0;
}

.gallery-scroll .dim {
  background: #dedede;
}

.dim .up {
  border-bottom-color: #9a9a9a;
}

/* Editor */
.editor {
  flex: 1;
  display: flex;
  margin-top: 1px;
  border-top: 1px solid #a3bfe0;
}

.editor-main {
  flex: 1;
  display: flex;
  flex-direction: column;
  min-width: 0;
}

.ruler {
  display: flex;
  align-items: center;
  height: 25px;
  background: #9bbae1;
}

.tab-stop {
  flex: none;
  width: 25px;
  height: 22px;
  border: 1px solid #4477cf;
  background: #b0c9ec;
}

.tab-stop i {
  width: 15px;
  height: 15px;
  border: 1px solid #4b6da0;
  background: linear-gradient(#333, #333) no-repeat 4px 4px / 2px 6px, linear-gradient(#333, #333) no-repeat 4px 8px / 6px 2px, #e3ecf8;
}

.ruler-strip {
  position: relative;
  flex: none;
  width: 1092px;
  height: 25px;
  margin-left: 109px;
  background:
    repeating-linear-gradient(90deg, #7f8a99 0 1px, transparent 1px 33px) no-repeat 99px 21px / 628px 3px,
    linear-gradient(#fff, #fff) no-repeat 66px 6px / 678px 12px,
    linear-gradient(#d5e4f8 1px, #b0c9ec 1px 11px, #d5e4f8 11px) no-repeat 13px 6px / 1079px 12px;
}

.ruler-scale {
  display: flex;
  width: 792px;
  height: 25px;
  align-items: center;
}

.cm {
  flex: 1;
  display: flex;
  align-items: center;
  justify-content: space-between;
  min-width: 0;
  height: 5px;
  border-right: 1px solid #4f5a6b;
  padding: 0 5px;
  color: #4d5665;
  font-size: 10px;
}

.cm i {
  width: 1px;
  height: 2px;
  background: #4f5a6b;
}

.cm span {
  width: 12px;
  margin: 0 -2px;
  text-align: center;
}

.marker {
  position: absolute;
}

.indent-left {
  left: 62px;
  top: 3px;
}

.indent-right {
  left: 740px;
  top: 10px;
}

.canvas {
  flex: 1;
  display: flex;
}

.left-ruler {
  width: 24px;
  background: #9bbae1;
}

.desk {
  flex: 1;
  position: relative;
  display: flex;
  justify-content: center;
  align-items: flex-start;
  overflow: hidden;
  padding-bottom: 6px;
  background: linear-gradient(#a0c0e9 0, #547fb3 66%, #6692d0 100%);
}

.swoosh {
  position: absolute;
  left: 0;
  top: 0;
}

.page {
  position: relative;
  width: 784px;
  padding: 12px 32px 35px 46px;
  background: #fff;
  border: 1px solid #5f6368;
  border-top: none;
  box-shadow: 3px 3px 8px rgba(20, 40, 80, .8);
  color: #000;
  font-family: 'Liberation Serif', serif;
  font-size: 11px;
}

.pupils {
  display: flex;
  gap: 42px;
  padding-left: 51px;
  margin-bottom: 10px;
  line-height: 14px;
  font-weight: 700;
}

.tasks {
  width: 705px;
  border-collapse: collapse;
  table-layout: fixed;
  color: #002060;
}

.tasks td {
  border: 1px solid #000;
  padding: 0 0 12px 5px;
  vertical-align: top;
}

.tasks td:first-child {
  width: 348px;
}

.tasks tr + tr td {
  padding-bottom: 9px;
}

.tasks tr:last-child td {
  padding-bottom: 8px;
}

.tasks h3 {
  font-size: 11px;
  line-height: 13px;
  text-align: center;
}

.tasks h3 span {
  font-size: 12px;
  color: #c00000;
}

.tasks h3 small {
  font-size: 10px;
}

.sums {
  display: grid;
  justify-content: center;
  font-size: 12px;
  line-height: 14px;
}

.division { grid-template-columns: 85px 91px 82px 28px; }
.product { grid-template-columns: 70px 58px 64px 34px; }

.squares {
  margin: 5px 0 0 9px;
}

.problem {
  padding-left: 5px;
  line-height: 15px;
  white-space: nowrap;
}

td:last-child .squares { margin-left: 25px; }
td:last-child .problem { padding-left: 15px; }

/* Scrollbar */
.scrollbar {
  display: flex;
  flex-direction: column;
  width: 17px;
  background: #a5c3ef;
}

.split {
  height: 6px;
  background: linear-gradient(#3c4a66, #3c4a66) no-repeat 4px 2px / 9px 2px, #a9c6f5;
}

.ruler-toggle {
  height: 17px;
  border: 1px solid #8b95ab;
  background: #c3cde0;
}

.track {
  flex: 1;
  display: flex;
  flex-direction: column;
  align-items: center;
  padding: 7px 0;
  border-left: 1px solid #b6d0f2;
  background: linear-gradient(90deg, #85a5d0, #7094c3 25%, #83a5d3 80%, #9dbbe4);
}

.track .up {
  border-width: 0 5px 5px;
  border-bottom-color: #45587c;
}

.track .arrow {
  border-width: 5px 5px 0;
  border-top-color: #45587c;
}

.thumb {
  width: 14px;
  height: 47px;
  margin: auto 0 57px;
  padding: 19px 3px;
  border: 1px solid #51668f;
  border-radius: 1px;
  background: linear-gradient(90deg, #f4f7fb, #dce5f2 50%, #b9c9e1 51%, #d9e3f1);
}

.thumb i {
  display: block;
  height: 7px;
  background: repeating-linear-gradient(#6a7385 0 1px, transparent 1px 2px);
}

.jump {
  display: flex;
  flex-direction: column;
  height: 51px;
  justify-content: space-around;
  align-items: center;
}

/* Status bar */
.status {
  display: flex;
  align-items: stretch;
  height: 22px;
  padding-right: 5px;
  border-top: 1px solid #567db1;
  border-bottom: 1px solid #e4effd;
  background: linear-gradient(#d8e7fc 0, #c5dcf9 35%, #a9cbf5 36%, #d3e4fb 100%);
  color: #15204f;
}

.status > button {
  border-right: 1px solid #8fb3e0;
  box-shadow: 1px 0 #eef5ff;
}

.page-no { width: 105px; }
.words { width: 101px; }
.spell { width: 33px; }

.status .spell {
  border: none;
  box-shadow: none;
}

.lang { width: 103px; }

.views {
  display: flex;
  margin: 1px 0 1px auto;
  border: 1px solid #7ea0d0;
  border-radius: 2px;
  background: linear-gradient(#c9dcf5, #b2cbed);
}

.views button {
  width: 18px;
}

.percent {
  width: 37px;
  text-align: center;
  line-height: 20px;
}

.status .round {
  border: none;
  box-shadow: none;
}

.zoom {
  width: 102px;
  appearance: none;
  background: linear-gradient(#6583b3, #6583b3) no-repeat 0 9px / 100% 1px, linear-gradient(#6583b3, #6583b3) no-repeat 50% 6px / 1px 8px;
}

.zoom::-webkit-slider-thumb {
  appearance: none;
  width: 9px;
  height: 13px;
  border: 1px solid #5a6f94;
  border-radius: 1px 1px 5px 5px;
  background: #e6effb;
}

/* Taskbar */
.taskbar {
  display: flex;
  gap: 2px;
  height: 40px;
  border-top: 1px solid #4e6078;
  background: linear-gradient(90deg, #8496ad 0, #8b9db5 55px, #a6bfdc 130px, #a6bfdc calc(100% - 236px), #8294ab calc(100% - 190px));
}

.start {
  width: 58px;
  padding-right: 4px;
}

.task {
  width: 60px;
}

.task.open {
  border: 1px solid #4f5f75;
  border-radius: 3px;
  box-shadow: inset 0 0 0 1px rgba(255, 255, 255, .6);
  background: linear-gradient(135deg, #cbd7e6, #aabfd9 50%, #a5bcd8);
}

.task.current {
  border-color: #1c2531;
  background: linear-gradient(135deg, #dfe6f0, #b9cae0 50%, #d3deec);
}

.hp { font: italic bold 10px 'Liberation Sans', sans-serif; }
.w07 { font: italic bold 14px 'Liberation Serif', serif; fill: #2f559c; }
.w10 { font: bold 19px 'Liberation Sans', sans-serif; fill: #2a5caa; }

.tray {
  display: flex;
  align-items: center;
  gap: 8px;
  margin-left: auto;
  color: #fff;
}

.layout {
  margin-right: 6px;
}

.tray .up {
  border-width: 0 5px 5px;
  border-bottom-color: #fff;
  margin-right: 2px;
}

.tray time {
  width: 76px;
  line-height: 17px;
  text-align: center;
}

.show-desktop {
  width: 14px;
  border: 1px solid #2f3c4e;
  box-shadow: inset 0 0 0 1px #8b9db3;
  background: linear-gradient(#8695a8, #4b5b70 50%, #6b7c92);
}
```
